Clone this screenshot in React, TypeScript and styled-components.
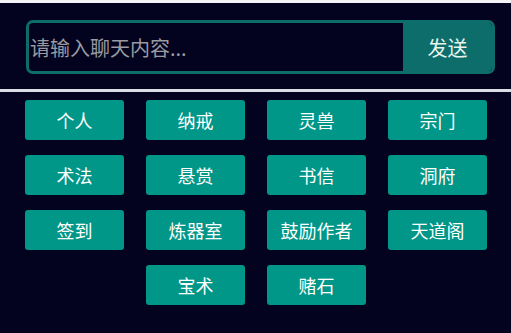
import React, { useState } from "react";
import styled, { createGlobalStyle } from "styled-components";

const GlobalStyle = createGlobalStyle`
  html, body {
    margin: 0;
    padding: 0;
    background: #03031f;
    font-family: "Noto Sans CJK SC", "Noto Sans", sans-serif;
  }
`;

const Page = styled.div`
  width: 511px;
  height: 333px;
  box-sizing: border-box;
  border-top: 3px solid #f4f4f8;
  background: #03031f;
  overflow: hidden;
`;

const InputBar = styled.div`
  padding: 17px 16px 15px 26px;
  border-bottom: 3px solid #dcdce6;
`;

const InputBox = styled.form`
  display: flex;
  height: 54px;
  box-sizing: border-box;
  border: 3px solid #0d6d6b;
  border-radius: 7px;
  overflow: hidden;
  background: #03031f;
`;

const TextInput = styled.input`
  flex: 1;
  min-width: 0;
  border: none;
  outline: none;
  background: transparent;
  padding: 0 0 0 1px;
  font: inherit;
  font-size: 20px;
  color: #e0e0e0;

  &::placeholder {
    color: #9a9aa0;
  }
`;

const SendButton = styled.button`
  width: 89px;
  border: none;
  background: #0d6d6b;
  color: #e6f4ee;
  font: inherit;
  font-size: 20px;
  padding: 0;
  cursor: pointer;
`;

const ActionGrid = styled.div`
  display: flex;
  flex-wrap: wrap;
  justify-content: center;
  gap: 15px 22px;
  padding: 8px 24px 0 25px;
`;

const ActionButton = styled.button`
  width: 99px;
  height: 40px;
  border: none;
  border-radius: 3px;
  background: #009688;
  color: #ffffff;
  font: inherit;
  font-size: 18px;
  padding: 0;
  cursor: pointer;
`;

const actions = [
  "个人", "纳戒", "灵兽", "宗门",
  "术法", "悬赏", "书信", "洞府",
  "签到", "炼器室", "鼓励作者", "天道阁",
  "宝术", "赌石",
];

export default function App() {
  const [text, setText] = useState("");

  return (
    <>
      <GlobalStyle />
      <Page>
        <InputBar>
          <InputBox onSubmit={(e) => { e.preventDefault(); setText(""); }}>
            <TextInput
              value={text}
              onChange={(e) => setText(e.target.value)}
              placeholder="请输入聊天内容..."
            />
            <SendButton type="submit">发送</SendButton>
          </InputBox>
        </InputBar>
        <ActionGrid>
          {actions.map((a) => (
            <ActionButton key={a}>{a}</ActionButton>
          ))}
        </ActionGrid>
      </Page>
    </>
  );
}
